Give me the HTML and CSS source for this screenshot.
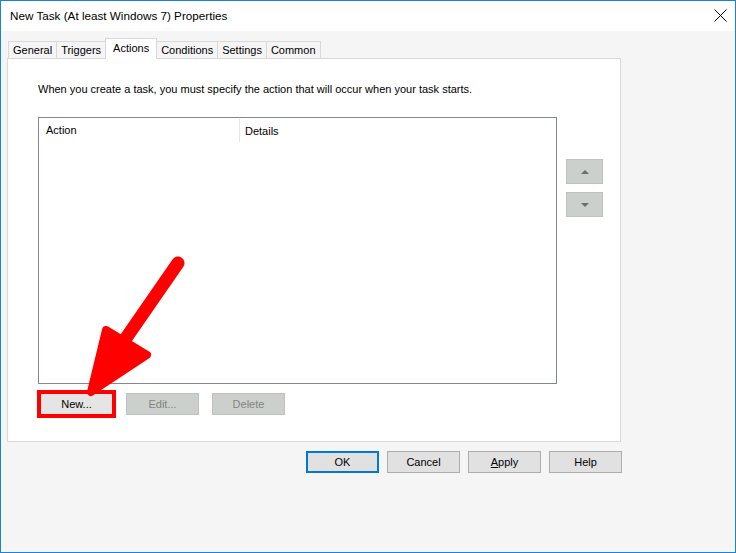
FILE: index.html
```html
<!DOCTYPE html>
<html>
<head>
<meta charset="utf-8">
<title>New Task Properties</title>
<link rel="stylesheet" href="styles.css">
</head>
<body>
<div class="window">
  <div class="titlebar">
    <span class="title">New Task (At least Windows 7) Properties</span>
    <svg class="close" width="13" height="13" viewBox="0 0 13 13"><path d="M0.5 0.5 L12.5 12.5 M12.5 0.5 L0.5 12.5" stroke="#000" stroke-width="1" fill="none"/></svg>
  </div>
  <div class="content">
    <div class="tabs">
      <div class="tab">General</div>
      <div class="tab">Triggers</div>
      <div class="tab tab-active">Actions</div>
      <div class="tab">Conditions</div>
      <div class="tab">Settings</div>
      <div class="tab">Common</div>
    </div>
    <div class="panel">
      <p class="desc">When you create a task, you must specify the action that will occur when your task starts.</p>
      <div class="list-row">
        <div class="listview">
          <div class="lv-header">
            <div class="lv-col lv-col-action">Action</div>
            <div class="lv-col lv-col-details">Details</div>
          </div>
        </div>
        <div class="order-buttons">
          <button class="order-btn"><svg width="8" height="4" viewBox="0 0 8 4"><polygon points="0,4 8,4 4,0" fill="#6b6e6b"/></svg></button>
          <button class="order-btn"><svg width="8" height="4" viewBox="0 0 8 4"><polygon points="0,0 8,0 4,4" fill="#6b6e6b"/></svg></button>
        </div>
      </div>
      <div class="action-buttons">
        <button class="btn btn-highlight">New...</button>
        <button class="btn btn-disabled">Edit...</button>
        <button class="btn btn-disabled">Delete</button>
      </div>
    </div>
    <div class="dialog-buttons">
      <button class="btn btn-default">OK</button>
      <button class="btn">Cancel</button>
      <button class="btn"><u>A</u>pply</button>
      <button class="btn">Help</button>
    </div>
  </div>
  <svg class="annotation" width="736" height="553" viewBox="0 0 736 553">
    <line x1="178" y1="263" x2="124" y2="341" stroke="#ff0000" stroke-width="13" stroke-linecap="round"/>
    <polygon points="106,330 147,355 91,392" fill="#ff0000" stroke="#ff0000" stroke-width="8" stroke-linejoin="round"/>
  </svg>
</div>
</body>
</html>
```
FILE: styles.css
```css
html, body {
  margin: 0;
  padding: 0;
}
body {
  font-family: "Liberation Sans", Arial, sans-serif;
  font-size: 11px;
  color: #000;
  background: #f5f5f5;
}
.window {
  position: relative;
  width: 736px;
  height: 553px;
  box-sizing: border-box;
  border: 1px solid #1883d7;
  background: #f5f5f5;
  display: flex;
  flex-direction: column;
  overflow: hidden;
}
.titlebar {
  height: 30px;
  flex: none;
  background: #fff;
  display: flex;
  align-items: center;
  justify-content: space-between;
  padding-left: 9px;
}
.title {
  font-size: 11.7px;
  line-height: 16px;
}
.close {
  align-self: flex-start;
  margin-top: 8px;
  margin-right: 8px;
}
.content {
  padding: 7px 0 0 6px;
  display: flex;
  flex-direction: column;
}
.tabs {
  display: flex;
  align-items: flex-end;
  height: 20px;
  margin-left: 1px;
}
.tab {
  box-sizing: border-box;
  height: 17px;
  padding: 1px 4px 0;
  line-height: 15px;
  border: 1px solid #d9d9d9;
  border-bottom: 0;
  background: #f5f5f5;
  white-space: nowrap;
}
.tab + .tab {
  margin-left: -1px;
}
.tab-active {
  position: relative;
  z-index: 1;
  height: 21px;
  margin-bottom: -1px;
  padding: 0 7px;
  line-height: 18px;
  background: #fff;
}
.panel {
  box-sizing: border-box;
  width: 614px;
  height: 384px;
  border: 1px solid #d9d9d9;
  background: #fff;
  padding-left: 30px;
  display: flex;
  flex-direction: column;
}
.desc {
  margin: 23px 0 0;
  line-height: 15px;
}
.list-row {
  display: flex;
  align-items: flex-start;
  margin-top: 20px;
}
.listview {
  box-sizing: border-box;
  width: 519px;
  height: 267px;
  border: 1px solid #828790;
  background: #fff;
}
.lv-header {
  display: flex;
  height: 24px;
}
.lv-col {
  box-sizing: border-box;
  line-height: 24px;
  padding-top: 1px;
}
.lv-col-action {
  width: 201px;
  padding-left: 7px;
  border-right: 1px solid #e5e5e5;
  margin-top: 1px;
  line-height: 23px;
  padding-top: 0;
}
.lv-col-details {
  padding-left: 5px;
}
.order-buttons {
  display: flex;
  flex-direction: column;
  gap: 8px;
  margin-left: 9px;
  margin-top: 42px;
}
.order-btn {
  box-sizing: border-box;
  width: 37px;
  height: 25px;
  padding: 0;
  margin: 0;
  border: 1px solid #bfc3bf;
  background: #ccd0cc;
  display: flex;
  align-items: center;
  justify-content: center;
}
.action-buttons {
  display: flex;
  gap: 13px;
  margin-top: 9px;
  padding-left: 2px;
}
.btn {
  box-sizing: border-box;
  width: 73px;
  height: 22px;
  margin: 0;
  padding: 0;
  font: inherit;
  color: #000;
  background: #e1e1e1;
  border: 1px solid #adadad;
  line-height: 18px;
}
.btn-disabled {
  background: #ccd0cc;
  border-color: #bfc3bf;
  color: #838383;
}
.btn-highlight {
  background: #e5e5e5;
  outline: 4px solid #ff0000;
  outline-offset: -1px;
}
.btn-default {
  border: 2px solid #0078d7;
}
.dialog-buttons {
  display: flex;
  justify-content: flex-end;
  gap: 8px;
  width: 615px;
  margin-top: 9px;
}
.annotation {
  position: absolute;
  left: -1px;
  top: -1px;
  pointer-events: none;
}
```
